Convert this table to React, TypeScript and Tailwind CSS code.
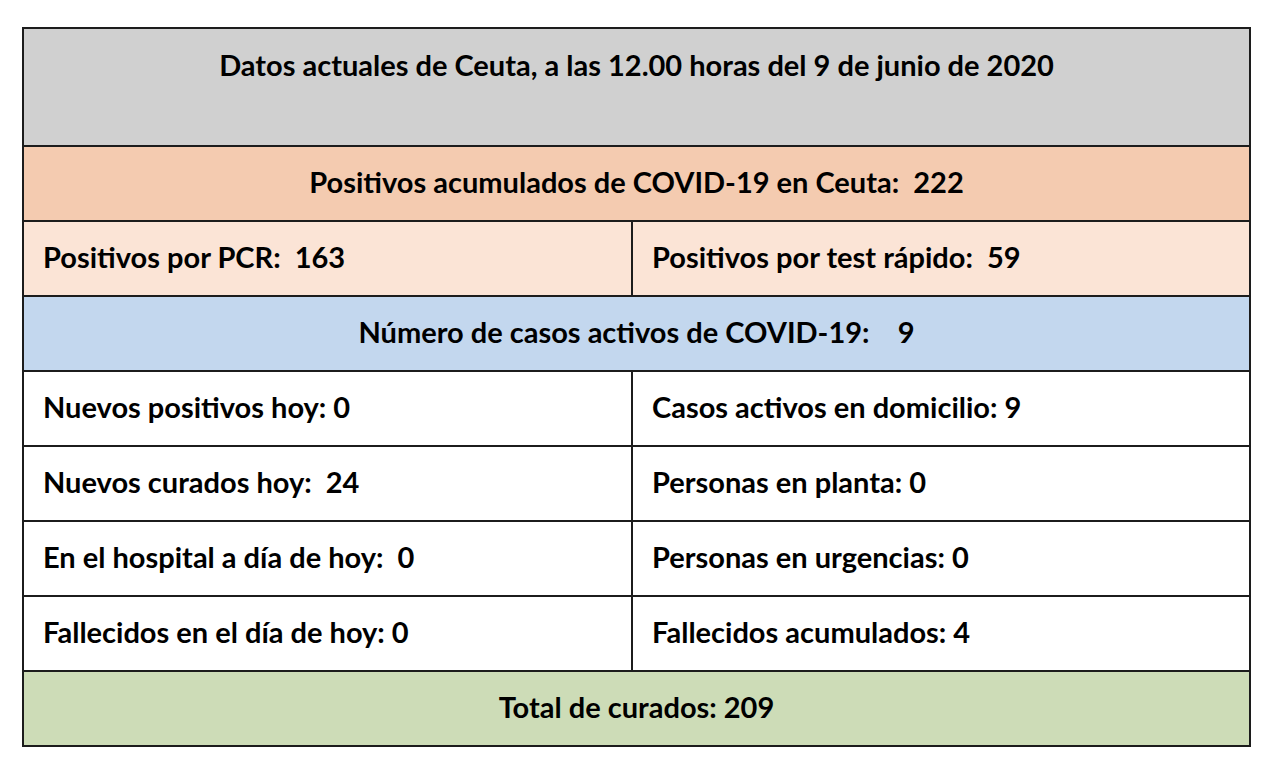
const rows: [string, string][] = [
  ["Nuevos positivos hoy: 0", "Casos activos en domicilio: 9"],
  ["Nuevos curados hoy:  24", "Personas en planta: 0"],
  ["En el hospital a día de hoy:  0", "Personas en urgencias: 0"],
  ["Fallecidos en el día de hoy: 0", "Fallecidos acumulados: 4"],
];

function Split({ left, right, bg }: { left: string; right: string; bg: string }) {
  return (
    <div className={`grid grid-cols-[609px_1fr] h-[75px] border-t-2 border-[#1c1c1c] ${bg}`}>
      <div className="flex items-center pl-[19px] pb-[3px] border-r-2 border-[#1c1c1c] whitespace-pre">{left}</div>
      <div className="flex items-center pl-[19px] pb-[3px] whitespace-pre">{right}</div>
    </div>
  );
}

export default function App() {
  return (
    <div
      className="w-[1280px] h-[780px] bg-white pt-[27px] pl-[22px] text-black font-bold text-[29px]"
      style={{ fontFamily: "Lato, 'Open Sans', sans-serif" }}
    >
      <div className="w-[1229px] border-2 border-[#1c1c1c]">
        <div className="h-[116px] bg-[#d0d0d0] flex justify-center pt-[14px]">
          Datos actuales de Ceuta, a las 12.00 horas del 9 de junio de 2020
        </div>
        <div className="h-[75px] border-t-2 border-[#1c1c1c] bg-[#f4cbb0] flex items-center justify-center pb-[3px] whitespace-pre">
          Positivos acumulados de COVID-19 en Ceuta:  222
        </div>
        <Split left="Positivos por PCR:  163" right="Positivos por test rápido:  59" bg="bg-[#fbe4d6]" />
        <div className="h-[75px] border-t-2 border-[#1c1c1c] bg-[#c3d7ee] flex items-center justify-center pb-[3px] whitespace-pre">
          Número de casos activos de COVID-19:    9
        </div>
        {rows.map(([l, r]) => (
          <Split key={l} left={l} right={r} bg="bg-white" />
        ))}
        <div className="h-[75px] border-t-2 border-[#1c1c1c] bg-[#cddcb7] flex items-center justify-center pb-[3px]">
          Total de curados: 209
        </div>
      </div>
    </div>
  );
}
